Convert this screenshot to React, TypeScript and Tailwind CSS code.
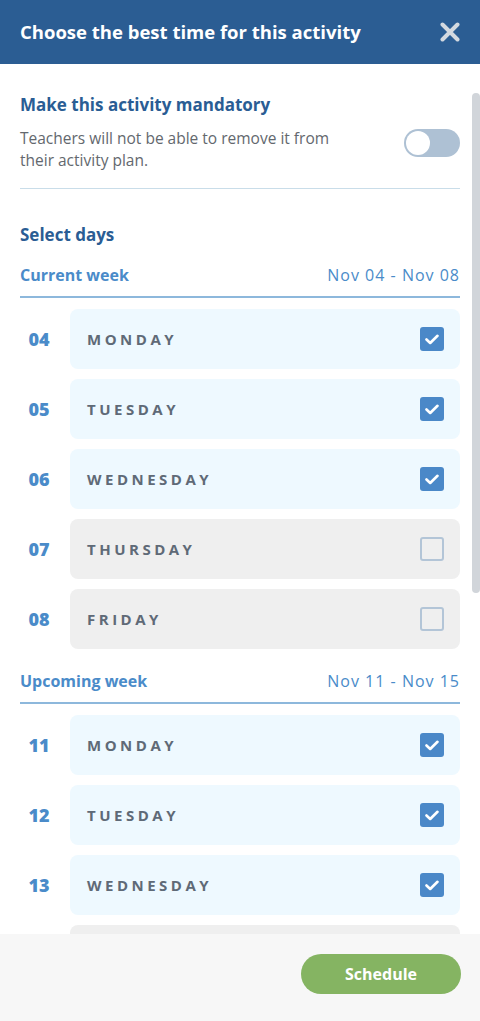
const weeks = [
  {
    label: "Current week",
    range: "Nov 04 - Nov 08",
    days: [
      { num: "04", name: "Monday", on: true },
      { num: "05", name: "Tuesday", on: true },
      { num: "06", name: "Wednesday", on: true },
      { num: "07", name: "Thursday", on: false },
      { num: "08", name: "Friday", on: false },
    ],
  },
  {
    label: "Upcoming week",
    range: "Nov 11 - Nov 15",
    days: [
      { num: "11", name: "Monday", on: true },
      { num: "12", name: "Tuesday", on: true },
      { num: "13", name: "Wednesday", on: true },
      { num: "14", name: "Thursday", on: false },
      { num: "15", name: "Friday", on: false },
    ],
  },
];

const Check = ({ on }: { on: boolean }) =>
  on ? (
    <span className="w-6 h-6 rounded-[3px] bg-[#4a88c8] flex items-center justify-center">
      <svg width="14" height="11" viewBox="0 0 14 11" fill="none">
        <path d="M1.5 5.5 L5.2 9 L12.5 1.8" stroke="white" strokeWidth="2.6" strokeLinecap="round" strokeLinejoin="round" />
      </svg>
    </span>
  ) : (
    <span className="w-6 h-6 rounded-[3px] border-2 border-[#b3c5d7]" />
  );

const App = () => (
  <div className="h-[1021px] w-[480px] flex flex-col bg-white font-['Open_Sans',sans-serif]">
    <header className="h-16 shrink-0 bg-[#2b5d93] flex items-center justify-between pl-5 pr-5">
      <h1 className="text-white text-[18.5px] font-bold">Choose the best time for this activity</h1>
      <svg width="20" height="20" viewBox="0 0 20 20">
        <path d="M2.5 2.5 L17.5 17.5 M17.5 2.5 L2.5 17.5" stroke="#d3d9e0" strokeWidth="4" strokeLinecap="round" />
      </svg>
    </header>

    <main className="flex-1 overflow-hidden relative">
      <div className="absolute right-0 top-[29px] w-2 h-[500px] rounded-full bg-[#d1d5da]" />
      <div className="px-5 pt-[29px]">
        <div className="pb-[17px] border-b border-[#c9dde9]">
          <h2 className="text-[#2a5d94] text-[17px] font-bold leading-6">Make this activity mandatory</h2>
          <div className="flex items-start justify-between mt-[10px]">
            <p className="text-[#63686e] text-[15.5px] leading-[22px] w-[335px]">
              Teachers will not be able to remove it from their activity plan.
            </p>
            <span className="mt-[2px] w-14 h-7 rounded-full bg-[#aec1d4] flex items-center pl-[2px]">
              <span className="w-6 h-6 rounded-full bg-white" />
            </span>
          </div>
        </div>

        <h2 className="text-[#2a5d94] text-[17px] font-bold leading-6 mt-[34px]">Select days</h2>

        {weeks.map((w, wi) => (
          <section key={w.label} className={wi === 0 ? "mt-[17px]" : "mt-[21px]"}>
            <div className="flex items-center justify-between text-[#4a8bc9] leading-[22px] pb-[10px] border-b-2 border-[#8db8dc]">
              <span className="text-[16px] font-bold">{w.label}</span>
              <span className="text-[16px] tracking-[1px]">{w.range}</span>
            </div>
            <div className="flex flex-col gap-[10px] mt-[11px]">
              {w.days.map((d) => (
                <div key={d.num} className="flex items-center gap-3">
                  <span className="w-[38px] text-center text-[#4a8bc9] text-[18px] font-extrabold">{d.num}</span>
                  <div
                    className={`flex-1 h-[60px] rounded-lg flex items-center justify-between pl-[17px] pr-4 ${
                      d.on ? "bg-[#eef9ff]" : "bg-[#efefef]"
                    }`}
                  >
                    <span className="uppercase text-[#5f6a77] text-[15px] font-bold tracking-[3.5px]">{d.name}</span>
                    <Check on={d.on} />
                  </div>
                </div>
              ))}
            </div>
          </section>
        ))}
      </div>
    </main>

    <footer className="h-[87px] shrink-0 bg-[#f7f7f7] flex justify-end items-start pt-5 pr-[19px]">
      <button className="w-40 h-10 rounded-full bg-[#85b462] text-white text-[16px] font-bold">Schedule</button>
    </footer>
  </div>
);

export default App;
